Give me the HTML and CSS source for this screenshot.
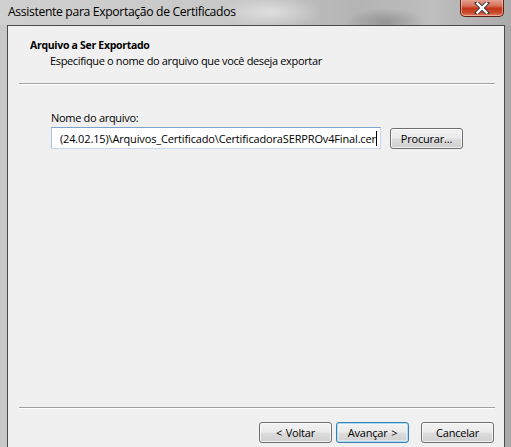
FILE: index.html
```html
<!DOCTYPE html>
<html lang="pt">
<head>
<meta charset="utf-8">
<link rel="stylesheet" href="styles.css">
</head>
<body>
<div class="window">
  <div class="titlebar">
    <span class="title">Assistente para Exportação de Certificados</span>
    <div class="close">
      <svg width="16" height="12" viewBox="0 0 16 12">
        <path d="M3 1 L13 11 M13 1 L3 11" stroke="#3a3a3a" stroke-width="4.2" stroke-linecap="square"/>
        <path d="M3.5 1.5 L12.5 10.5 M12.5 1.5 L3.5 10.5" stroke="#ffffff" stroke-width="2.4" stroke-linecap="square"/>
      </svg>
    </div>
  </div>
  <div class="client">
    <div class="header">
      <div class="h-title">Arquivo a Ser Exportado</div>
      <div class="h-sub">Especifique o nome do arquivo que você deseja exportar</div>
    </div>
    <div class="sep"></div>
    <div class="body">
      <div class="label">Nome do arquivo:</div>
      <div class="row">
        <div class="input"><span class="val">(24.02.15)\Arquivos_Certificado\CertificadoraSERPROv4Final.cer</span><span class="caret"></span></div>
        <button class="btn browse">Procurar...</button>
      </div>
    </div>
    <div class="sep"></div>
    <div class="footer">
      <button class="btn">&lt; Voltar</button>
      <button class="btn default">Avançar &gt;</button>
      <button class="btn cancel">Cancelar</button>
    </div>
  </div>
</div>
</body>
</html>
```
FILE: styles.css
```css
html, body {
  margin: 0;
  padding: 0;
}
body {
  width: 511px;
  height: 447px;
  overflow: hidden;
  font-family: "Open Sans", "Noto Sans", sans-serif;
  font-size: 11px;
  color: #000;
  background: linear-gradient(90deg, #c9c9c9 0%, #bdbdbd 60%, #a8a8a8 100%);
}
.window {
  width: 511px;
  height: 447px;
  display: flex;
  flex-direction: column;
}
.titlebar {
  height: 25px;
  display: flex;
  justify-content: space-between;
  align-items: flex-start;
  padding-left: 8px;
  padding-right: 8px;
  background:
    radial-gradient(ellipse 40px 14px at 385px 22px, rgba(120,120,120,0.55), rgba(120,120,120,0) 100%),
    radial-gradient(ellipse 50px 16px at 270px 12px, rgba(235,235,235,0.7), rgba(235,235,235,0) 100%),
    linear-gradient(90deg, #d0d0d0 0%, #c8c8c8 45%, #b4b4b4 70%, #bebebe 85%, #aaaaaa 100%);
  box-sizing: border-box;
}
.title {
  font-size: 12.2px;
  letter-spacing: -0.35px;
  line-height: 16px;
  margin-top: 4px;
  color: #000;
}
.close {
  width: 44px;
  height: 18px;
  margin-top: -1px;
  margin-right: -1px;
  box-sizing: border-box;
  border: 1px solid #5b2218;
  border-top: none;
  border-radius: 0 0 5px 5px;
  background: linear-gradient(180deg, #e7a898 0%, #d5705a 40%, #c4361c 55%, #c94a2c 80%, #e08060 100%);
  box-shadow: inset 0 0 0 1px rgba(255,220,210,0.5);
  display: flex;
  justify-content: center;
  align-items: center;
}
.client {
  flex: 1;
  margin: 0 6px 0 7px;
  border: 1px solid #4a4a4a;
  border-bottom: none;
  background: #f0f0f0;
  display: flex;
  flex-direction: column;
}
.header {
  height: 57px;
  padding-left: 22px;
  padding-top: 12px;
  box-sizing: border-box;
}
.h-title {
  font-weight: bold;
  font-size: 10.5px;
  line-height: 15px;
  letter-spacing: -0.3px;
}
.h-sub {
  padding-left: 20px;
  line-height: 15px;
  letter-spacing: -0.35px;
}
.sep {
  margin: 0 9px 0 11px;
  height: 1px;
  background: #a0a0a0;
  border-bottom: 1px solid #ffffff;
}
.body {
  height: 322px;
  padding-top: 25px;
  padding-left: 43px;
  box-sizing: border-box;
}
.label {
  line-height: 15px;
  letter-spacing: -0.3px;
}
.row {
  display: flex;
  align-items: center;
  gap: 9px;
  margin-top: 2px;
}
.input {
  width: 330px;
  height: 22px;
  flex-shrink: 0;
  box-sizing: border-box;
  border: 1px solid #abadb3;
  border-top-color: #7da2ce;
  border-left-color: #a9c3e3;
  border-right-color: #c5d8ef;
  border-bottom-color: #c5d8ef;
  background: #fff;
  display: flex;
  align-items: center;
  padding-left: 8px;
  white-space: nowrap;
  overflow: hidden;
  letter-spacing: -0.15px;
}
.caret {
  display: inline-block;
  flex-shrink: 0;
  width: 1px;
  height: 15px;
  background: #000;
}
.btn {
  font-family: inherit;
  font-size: 11px;
  letter-spacing: -0.2px;
  word-spacing: 1px;
  color: #000;
  width: 73px;
  height: 21px;
  padding: 0;
  box-sizing: border-box;
  border: 1px solid #707070;
  border-radius: 3px;
  background: linear-gradient(180deg, #f2f2f2 0%, #ebebeb 48%, #dddddd 52%, #cfcfcf 100%);
  box-shadow: inset 0 0 0 1px rgba(255,255,255,0.7);
}
.btn.default {
  border-color: #3c7fb1;
  box-shadow: inset 0 0 0 1px #a8dcf4, inset 0 0 0 2px rgba(255,255,255,0.4);
}
.footer {
  flex: 1;
  display: flex;
  justify-content: flex-end;
  align-items: flex-start;
  padding-top: 13px;
  padding-right: 10px;
  gap: 4px;
}
.btn.cancel {
  margin-left: 8px;
}
```
